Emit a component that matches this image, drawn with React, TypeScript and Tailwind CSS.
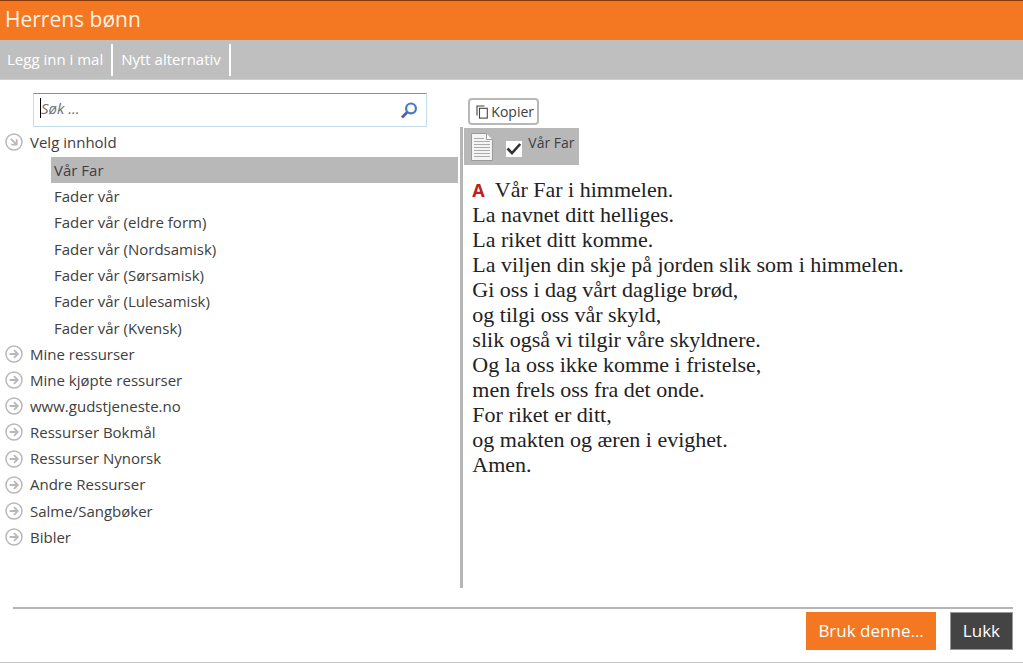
import { useState } from "react";

const prayers = [
  "Vår Far",
  "Fader vår",
  "Fader vår (eldre form)",
  "Fader vår (Nordsamisk)",
  "Fader vår (Sørsamisk)",
  "Fader vår (Lulesamisk)",
  "Fader vår (Kvensk)",
];

const folders = [
  "Mine ressurser",
  "Mine kjøpte ressurser",
  "www.gudstjeneste.no",
  "Ressurser Bokmål",
  "Ressurser Nynorsk",
  "Andre Ressurser",
  "Salme/Sangbøker",
  "Bibler",
];

const lines = [
  "La navnet ditt helliges.",
  "La riket ditt komme.",
  "La viljen din skje på jorden slik som i himmelen.",
  "Gi oss i dag vårt daglige brød,",
  "og tilgi oss vår skyld,",
  "slik også vi tilgir våre skyldnere.",
  "Og la oss ikke komme i fristelse,",
  "men frels oss fra det onde.",
  "For riket er ditt,",
  "og makten og æren i evighet.",
  "Amen.",
];

function CircleArrow({ open = false }: { open?: boolean }) {
  return (
    <svg viewBox="0 0 18 18" className="size-[18px] shrink-0" fill="none" stroke="#b8b8b8" aria-hidden="true">
      <circle cx="9" cy="9" r="8" strokeWidth="1.5" />
      <g transform={open ? "rotate(45 9 9)" : undefined} strokeWidth="1.8">
        <path d="M4.6 9h8.2M9 5.2 12.8 9 9 12.8" />
      </g>
    </svg>
  );
}

function SearchIcon() {
  return (
    <svg viewBox="0 0 18 18" className="size-[18px]" fill="none" aria-hidden="true">
      <path d="M7.4 11 2 16.4" stroke="#4a5fb0" strokeWidth="2.8" />
      <circle cx="11" cy="7.4" r="4.9" stroke="#4778c6" strokeWidth="2.2" />
    </svg>
  );
}

function CopyIcon() {
  return (
    <svg viewBox="0 0 13 14" className="h-[14px] w-[13px]" fill="none" stroke="#444" strokeWidth="1.1" aria-hidden="true">
      <path d="M8.5 1H1v9.5" />
      <rect x="3.5" y="3.3" width="7.8" height="9.8" />
    </svg>
  );
}

function DocumentIcon() {
  return (
    <svg viewBox="0 0 24 30" className="h-[30px] w-6" aria-hidden="true">
      <path d="M1.5 1.5h15l6 6v21h-21z" fill="#f4f4f4" stroke="#9a9a9a" />
      <path d="M16.5 1.5v6h6" fill="#fff" stroke="#9a9a9a" />
      <path d="M4 6.5h10M4 9.5h16M4 12.5h16M4 15.5h16M4 18.5h16M4 21.5h16M4 24.5h16" stroke="#acacac" />
    </svg>
  );
}

export default function App() {
  const [selected, setSelected] = useState(0);
  const [checked, setChecked] = useState(true);

  return (
    <div className="flex min-h-screen flex-col border-b border-[#c4c4c4] bg-white font-['Open_Sans',sans-serif] text-[15px] text-[#404040]">
      <header className="flex h-10 items-center border-t border-[#8a3a08] bg-[#f47721] px-[5px]">
        <h1 className="pb-1 text-[21px] leading-7 font-normal text-[#fff1e2]">Herrens bønn</h1>
      </header>
      <nav className="flex h-10 items-center border-b border-[#d0d0d0] bg-[#bfbfbf] font-medium text-white">
        <button className="h-8 border-r-2 border-white pr-2 pl-[7px]">Legg inn i mal</button>
        <button className="h-8 border-r-2 border-white px-2">Nytt alternativ</button>
      </nav>

      <div className="flex h-[47px]">
        <div className="w-[45%] pt-[13px] pr-[33px] pl-[33px]">
          <form className="flex h-[34px] items-center border border-[#c3dcea] border-t-[#5f9cc4] pr-2" onSubmit={(e) => e.preventDefault()}>
            <span className="mb-1 ml-1.5 h-5 w-px bg-black" />
            <input
              type="text"
              aria-label="Søk"
              placeholder="Søk ..."
              className="min-w-0 flex-1 pb-1 outline-none placeholder:text-[#707070] placeholder:italic"
            />
            <button type="submit" aria-label="Søk">
              <SearchIcon />
            </button>
          </form>
        </div>
        <div className="flex-1 px-2 pt-[18px]">
          <button className="flex h-[27px] items-center gap-0.5 rounded-[4px] border-2 border-[#b8b8b8] pr-[3px] pl-1.5 text-sm">
            <CopyIcon />
            Kopier
          </button>
        </div>
      </div>

      <main className="flex flex-1">
        <div className="w-[45%]">
          <button className="flex h-[30px] items-center gap-[7px] pl-[5px]">
            <CircleArrow open />
            Velg innhold
          </button>
          <ul className="grid h-[184px] auto-rows-fr pr-0.5 pl-[51px]">
            {prayers.map((name, i) => (
              <li key={name}>
                <button
                  onClick={() => setSelected(i)}
                  className={`h-full w-full pl-[3px] text-left ${i === selected ? "bg-[#b8b8b8]" : ""}`}
                >
                  {name}
                </button>
              </li>
            ))}
          </ul>
          <ul className="grid h-[209px] auto-rows-fr pl-[5px]">
            {folders.map((name) => (
              <li key={name}>
                <button className="flex h-full items-center gap-[7px]">
                  <CircleArrow />
                  {name}
                </button>
              </li>
            ))}
          </ul>
        </div>
        <article className="flex-1 border-l-3 border-[#b5b5b5] pt-px pl-px">
          <label className="flex h-[37px] w-fit items-center bg-[#b8b8b8] pr-1 pl-1.5">
            <DocumentIcon />
            <input
              type="checkbox"
              checked={checked}
              onChange={(e) => setChecked(e.target.checked)}
              className="peer sr-only"
            />
            <span className="mt-1 ml-3 flex size-4 items-center justify-center bg-white peer-focus-visible:outline">
              {checked && (
                <svg viewBox="0 0 16 16" className="size-4" fill="none" stroke="#333" strokeWidth="2.6" aria-hidden="true">
                  <path d="M1.5 7.5 6 12.2 14.2 3" />
                </svg>
              )}
            </span>
            <span className="ml-1.5 pb-2 text-sm">Vår Far</span>
          </label>
          <div className="px-2 pt-3 font-['Liberation_Serif',serif] text-[22px] leading-[25px] text-[#222]">
            <p>
              <b className="mr-2.5 font-['Open_Sans',sans-serif] text-lg leading-none text-[#c0201a]">A</b>
              Vår Far i himmelen.
            </p>
            {lines.map((line) => (
              <p key={line}>{line}</p>
            ))}
          </div>
        </article>
      </main>

      <footer className="mt-[19px] mr-2.5 mb-3 ml-[13px] flex justify-end gap-3.5 border-t-2 border-[#b5b5b5] pt-[3px] text-[17px] text-white">
        <button className="h-[38px] bg-[#f47721] px-3">Bruk denne...</button>
        <button className="h-[38px] border border-[#999] bg-[#444] px-3">Lukk</button>
      </footer>
    </div>
  );
}
